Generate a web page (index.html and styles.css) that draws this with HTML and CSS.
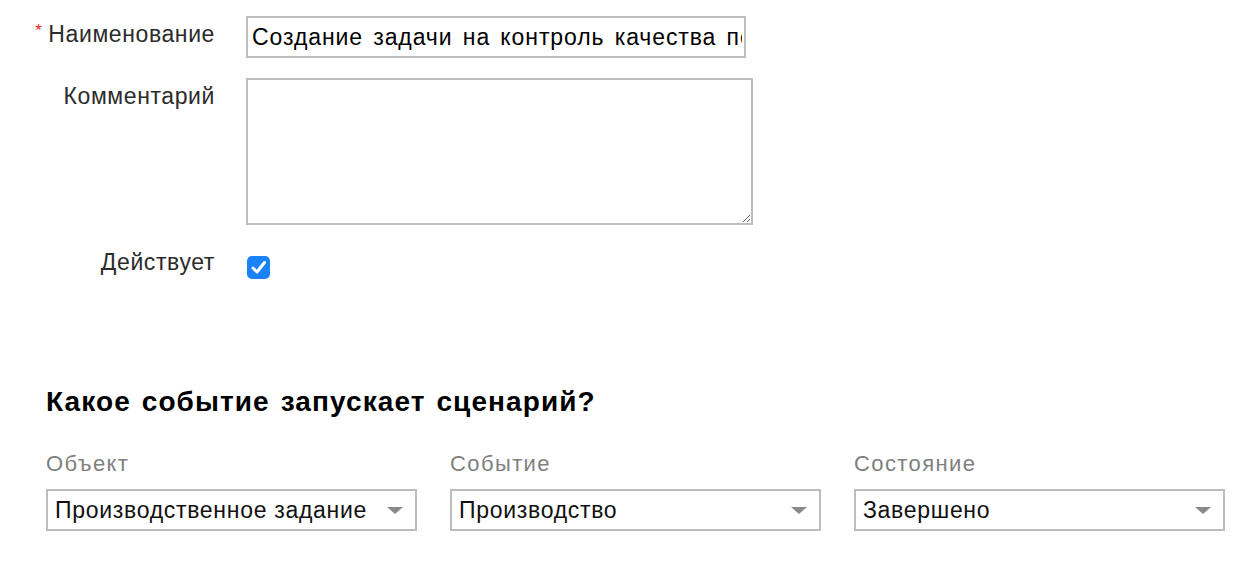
FILE: index.html
```html
<!DOCTYPE html>
<html lang="ru">
<head>
<meta charset="utf-8">
<title>Сценарий</title>
<link rel="stylesheet" href="styles.css">
</head>
<body>
<div class="page">
  <div class="form">
    <div class="label label-top"><span class="req">*</span>Наименование</div>
    <div class="field">
      <input class="text-input" type="text" value="Создание задачи на контроль качества после завершения производства">
    </div>

    <div class="label label-top">Комментарий</div>
    <div class="field">
      <textarea class="text-area"></textarea>
    </div>

    <div class="label label-mid">Действует</div>
    <div class="field field-check">
      <span class="checkbox">
        <svg width="23" height="23" viewBox="0 0 23 23"><path d="M6 12 L10 16 L17.5 6.5" fill="none" stroke="#fff" stroke-width="3" stroke-linecap="round" stroke-linejoin="round"/></svg>
      </span>
    </div>
  </div>

  <h2 class="heading">Какое событие запускает сценарий?</h2>

  <div class="selects">
    <div class="sel-col">
      <div class="sel-label">Объект</div>
      <div class="select"><span class="sel-text">Производственное задание</span><span class="arrow"></span></div>
    </div>
    <div class="sel-col">
      <div class="sel-label">Событие</div>
      <div class="select"><span class="sel-text">Производство</span><span class="arrow"></span></div>
    </div>
    <div class="sel-col">
      <div class="sel-label">Состояние</div>
      <div class="select"><span class="sel-text">Завершено</span><span class="arrow"></span></div>
    </div>
  </div>
</div>
</body>
</html>
```

FILE: styles.css
```css
html, body {
  margin: 0;
  padding: 0;
  background: #fff;
}

body {
  font-family: "Liberation Sans", Arial, Helvetica, sans-serif;
  color: #000;
}

.page {
  padding-top: 16px;
  width: 1260px;
}

.form {
  display: grid;
  grid-template-columns: 215px 507px;
  column-gap: 31px;
  row-gap: 20px;
}

.label {
  text-align: right;
  font-size: 23px;
  letter-spacing: 0.6px;
  line-height: 24px;
  color: #2b2b2b;
  white-space: nowrap;
}

.label-top {
  padding-top: 6px;
}

.label-mid {
  align-self: center;
  margin-top: 0;
}

.req {
  position: relative;
  top: -6px;
  color: #e8251f;
  font-size: 17px;
  margin-right: 6px;
}

.field {
  display: flex;
}

.text-input {
  width: 500px;
  height: 42px;
  box-sizing: border-box;
  border: 2px solid #bdbdbd;
  padding: 0 2px 0 4px;
  margin: 0;
  font-family: "Liberation Sans", Arial, sans-serif;
  font-size: 23px;
  letter-spacing: 0.9px;
  word-spacing: 3px;
  color: #000;
  outline: none;
  background: #fff;
}

.text-area {
  width: 507px;
  height: 147px;
  box-sizing: border-box;
  border: 2px solid #bdbdbd;
  margin: 0;
  padding: 4px;
  font-family: "Liberation Sans", Arial, sans-serif;
  font-size: 22px;
  resize: both;
  outline: none;
}

.field-check {
  padding-top: 11px;
}

.checkbox {
  width: 23px;
  height: 23px;
  margin-left: 1px;
  border-radius: 5px;
  background: #1c82f7;
  display: flex;
  align-items: center;
  justify-content: center;
}

.heading {
  margin: 107px 0 0 46px;
  font-size: 28px;
  letter-spacing: 1.1px;
  word-spacing: 2px;
  line-height: 32px;
  font-weight: bold;
  color: #000;
}

.selects {
  display: flex;
  gap: 33px;
  margin: 33px 0 0 46px;
}

.sel-col {
  width: 371px;
  display: flex;
  flex-direction: column;
}

.sel-label {
  font-size: 22px;
  letter-spacing: 1.4px;
  line-height: 26px;
  color: #808080;
  margin-bottom: 12px;
}

.select {
  height: 42px;
  box-sizing: border-box;
  border: 2px solid #bdbdbd;
  display: flex;
  align-items: center;
  justify-content: space-between;
  padding: 0 12px 0 7px;
  background: #fff;
}

.sel-text {
  font-size: 23px;
  letter-spacing: 0.7px;
  color: #111;
}

.arrow {
  width: 0;
  height: 0;
  border-left: 8px solid transparent;
  border-right: 8px solid transparent;
  border-top: 7px solid #8a8a8a;
}
```
